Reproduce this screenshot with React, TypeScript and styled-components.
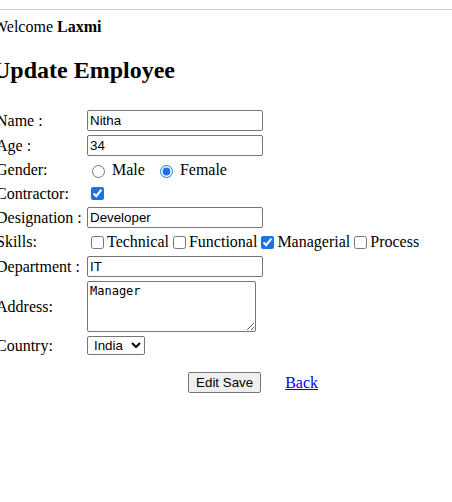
import React from "react";
import styled, { createGlobalStyle } from "styled-components";

const Global = createGlobalStyle`
  html, body { margin: 0; padding: 0; background: #ffffff; }
  body { font-family: "Liberation Serif", "Times New Roman", serif; font-size: 16px; color: #000; overflow: hidden; }
`;

const Page = styled.div`
  display: flex;
  flex-direction: column;
`;

const Rule = styled.div`
  margin-top: 9px;
  height: 1px;
  background: #d0d0d0;
`;

const Welcome = styled.div`
  margin: 8px 0 0 -7px;
  line-height: 18px;
`;

const Title = styled.h2`
  margin: 21px 0 0 -7px;
  font-size: 24px;
  font-weight: bold;
  line-height: 27px;
`;

const Form = styled.div`
  display: grid;
  grid-template-columns: 91px max-content;
  row-gap: 4px;
  margin: 26px 0 0 -4px;
  align-items: center;
  width: max-content;
`;

const Label = styled.div`
  line-height: 18px;
  white-space: nowrap;
`;

const Value = styled.div<{ $h: number }>`
  display: flex;
  align-items: center;
  height: ${(p) => p.$h}px;
  white-space: nowrap;
  line-height: 18px;
`;

const TextInput = styled.input`
  box-sizing: border-box;
  width: 176px;
  height: 21px;
  margin: 0;
  padding: 1px 2px;
  border: 1px solid #767676;
  border-radius: 2px;
  font-family: "Liberation Sans", Arial, sans-serif;
  font-size: 13.33px;
  color: #000;
  background: #fff;
`;

const Radio = styled.input<{ $left?: number }>`
  width: 13px;
  height: 13px;
  margin: 2px 3px 0 ${(p) => p.$left ?? 5}px;
  accent-color: #1a73e8;
`;

const Check = styled.input`
  width: 13px;
  height: 13px;
  margin: 3px 3px 3px 4px;
  accent-color: #1a73e8;
`;

const OptText = styled.span<{ $after?: number }>`
  margin-left: ${(p) => (p.$after ? 4 : 0)}px;
  margin-right: ${(p) => p.$after ?? 0}px;
`;

const Area = styled.textarea`
  box-sizing: border-box;
  width: 169px;
  height: 51px;
  margin: 0;
  padding: 2px;
  border: 1px solid #767676;
  border-radius: 2px;
  font-family: "DejaVu Sans Mono", "Liberation Mono", monospace;
  font-size: 12px;
  color: #000;
  resize: both;
`;

const Select = styled.select`
  box-sizing: border-box;
  width: 58px;
  height: 19px;
  margin: 0;
  padding: 0 0 0 2px;
  border: 1px solid #767676;
  border-radius: 2px;
  font-family: "Liberation Sans", Arial, sans-serif;
  font-size: 13.33px;
  color: #000;
  background: #fff;
`;

const Actions = styled.div`
  grid-column: 2;
  display: flex;
  justify-content: center;
  align-items: center;
  gap: 24px;
  margin-top: 13px;
  height: 21px;
`;

const Button = styled.button`
  box-sizing: border-box;
  height: 21px;
  padding: 1px 7px;
  border: 1px solid #767676;
  border-radius: 2px;
  background: #efefef;
  font-family: "Liberation Sans", Arial, sans-serif;
  font-size: 13.33px;
  color: #000;
`;

const BackLink = styled.a`
  color: #0000ee;
  text-decoration: underline;
  font-size: 16px;
`;

export default function App() {
  return (
    <Page>
      <Global />
      <Rule />
      <Welcome>
        Welcome <b>Laxmi</b>
      </Welcome>
      <Title>Update Employee</Title>
      <Form>
        <Label>Name :</Label>
        <Value $h={21}>
          <TextInput defaultValue="Nitha" />
        </Value>
        <Label>Age :</Label>
        <Value $h={21}>
          <TextInput defaultValue="34" />
        </Value>
        <Label>Gender:</Label>
        <Value $h={20}>
          <Radio type="radio" name="g" />
          <OptText $after={15}>Male</OptText>
          <Radio type="radio" name="g" defaultChecked $left={0} />
          <OptText $after={1}>Female</OptText>
        </Value>
        <Label>Contractor:</Label>
        <Value $h={19}>
          <Check type="checkbox" defaultChecked />
        </Value>
        <Label>Designation :</Label>
        <Value $h={21}>
          <TextInput defaultValue="Developer" />
        </Value>
        <Label>Skills:</Label>
        <Value $h={20}>
          <Check type="checkbox" />
          <OptText>Technical</OptText>
          <Check type="checkbox" />
          <OptText>Functional</OptText>
          <Check type="checkbox" defaultChecked />
          <OptText>Managerial</OptText>
          <Check type="checkbox" />
          <OptText>Process</OptText>
        </Value>
        <Label>Department :</Label>
        <Value $h={21}>
          <TextInput defaultValue="IT" />
        </Value>
        <Label>Address:</Label>
        <Value $h={51}>
          <Area defaultValue="Manager" />
        </Value>
        <Label>Country:</Label>
        <Value $h={19}>
          <Select defaultValue="India">
            <option>India</option>
            <option>USA</option>
          </Select>
        </Value>
        <Actions>
          <Button type="button">Edit Save</Button>
          <BackLink href="#">Back</BackLink>
        </Actions>
      </Form>
    </Page>
  );
}
